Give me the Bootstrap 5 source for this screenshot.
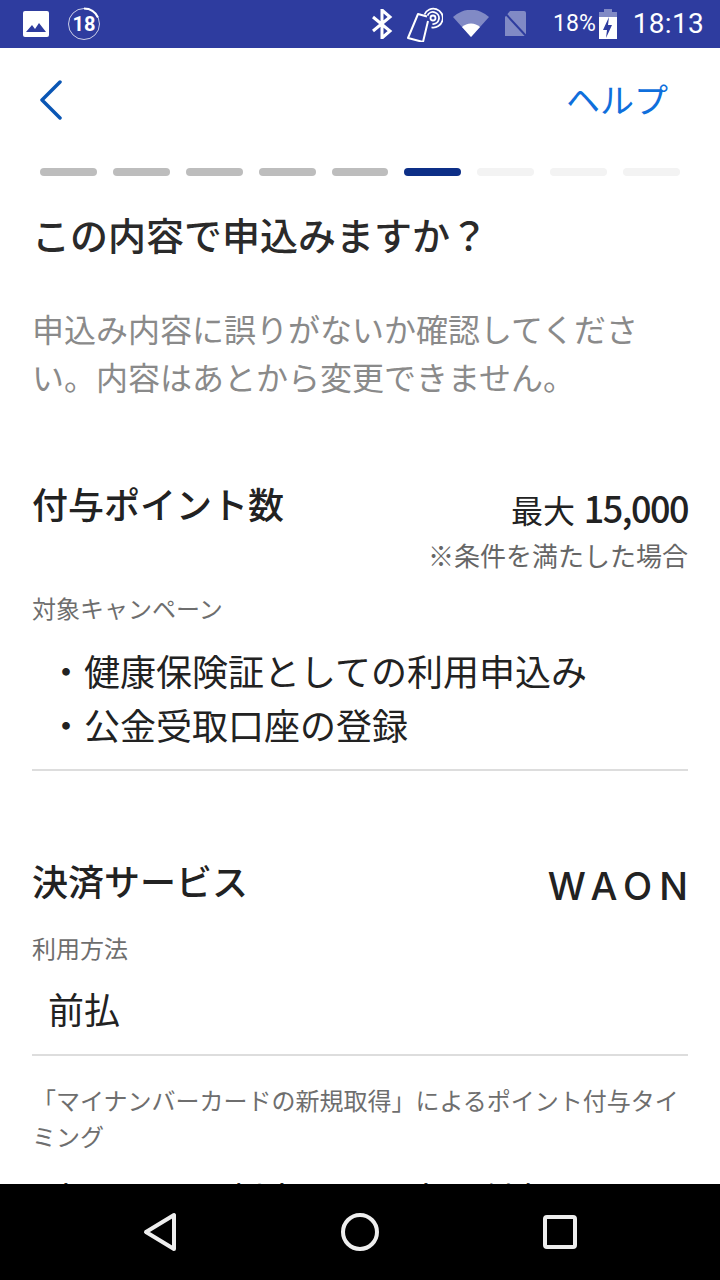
<!DOCTYPE html>
<html lang="ja">
<head>
    <meta charset="UTF-8">
    <title>申込み確認</title>
    <meta name="viewport" content="width=device-width, initial-scale=1">
    <link href="https://cdn.jsdelivr.net/npm/bootstrap@5.3.3/dist/css/bootstrap.min.css" rel="stylesheet">
    <style>
        body { font-family: "Noto Sans CJK JP", "Noto Sans", sans-serif; background: #fff; color: #222; }
        .phone { width: 720px; height: 1280px; overflow: hidden; }
        .status-bar { height: 48px; background: #2e3c9f; color: #fff; font-family: Roboto, sans-serif; padding: 0 16px 0 22px; }
        .status-clock { font-size: 28px; letter-spacing: .3px; margin-left: 15px; }
        .status-pct { font-size: 23px; margin-left: 25px; margin-right: 2px; }
        .gap-nfc { margin-left: 14px; }
        .gap-wifi { margin-left: 10px; }
        .gap-sim { margin-left: 13px; }
        .app-scroll { height: 1136px; overflow: hidden; padding: 0 32px; }
        .top-row { height: 104px; }
        .help-link { color: #0f6fdc; font-size: 34px; margin: 0 20px 3px 0; text-decoration: none; line-height: 1; }
        .step-row { gap: 16px; padding: 0 8px; margin-bottom: 32px; }
        .step { flex: 1; height: 8px; border-radius: 4px; background: #f3f3f3; }
        .step-done { background: #bdbdbd; }
        .step-now { background: #0d2f87; }
        .page-title { font-size: 38px; line-height: 52px; font-weight: 500; margin: 0 0 44px; color: #2a2a2a; }
        .page-lead { font-size: 32px; line-height: 48px; color: #8a8a8a; margin: 0 0 79px; }
        .item-head { font-size: 36px; line-height: 48px; font-weight: 500; }
        .item-value { font-size: 32px; line-height: 48px; margin-top: 4px; white-space: nowrap; }
        .item-value-low { margin-top: 6px; }
        .value-num { font-size: 36px; font-weight: 500; letter-spacing: -1.500px; margin-left: 2px; }
        .value-wide { font-family: Inter, sans-serif; font-size: 38px; font-weight: 500; letter-spacing: 7px; margin-right: -7px; }
        .item-note { font-size: 26px; line-height: 40px; color: #666; margin-top: 2px; }
        .item-label { font-size: 24px; line-height: 36px; color: #6e6e6e; }
        .item-body { font-size: 36px; line-height: 54px; margin-top: 17px; }
        .item-usage { margin-top: 15px; }
        .rule { border-bottom: 2px solid #ddd; padding-bottom: 18px; }
        .rule-short { padding-bottom: 19px; }
        .label-campaign { margin-top: 15px; }
        .section-second { margin-top: 85px; }
        .label-usage { margin-top: 20px; }
        .label-timing { margin-top: 26px; }
        .clipped-line { margin-top: 17px; }
        .nav-slot { width: 200px; }
    </style>
</head>
<body>
    <div class="phone d-flex flex-column">
        <div class="status-bar d-flex align-items-center flex-shrink-0">
            <svg width="28" height="28" viewBox="0 0 28 28"><rect x="1" y="1" width="26" height="26" rx="2" fill="#fff"/><path d="M4 22l6-7 3 4 4-6 7 9z" fill="#2e3c9f"/></svg>
            <svg class="ms-3" width="36" height="36" viewBox="0 0 36 36"><circle cx="18" cy="18" r="15.500" fill="none" stroke="#fff" stroke-opacity=".75" stroke-width="1"/><path d="M18 2.500a15.500 15.500 0 0 1 14 9" fill="none" stroke="#fff" stroke-width="2"/><text x="18" y="25" text-anchor="middle" font-family="Roboto" font-weight="700" font-size="20" fill="#fff">18</text></svg>
            <div class="ms-auto d-flex align-items-center">
                <svg width="22" height="30" viewBox="0 0 22 30"><path d="M2 8l17 14-8 7V1l8 7L2 22" fill="none" stroke="#fff" stroke-width="3"/></svg>
                <svg class="gap-nfc" width="36" height="36" viewBox="0 0 36 36"><path d="M20 10.500L11 8 1 32l15 4 5-21" fill="none" stroke="#fff" stroke-width="2" stroke-linejoin="round"/><circle cx="26" cy="12" r="2.500" fill="none" stroke="#fff" stroke-width="1.800"/><path d="M20.500 9.600A6 6 0 1 1 25.500 18M17.500 8.500A9.500 9.500 0 1 1 24.500 21.400" fill="none" stroke="#fff" stroke-width="1.800"/></svg>
                <svg class="gap-wifi" width="36" height="28" viewBox="0 0 36 28"><path d="M0 7a26 26 0 0 1 36 0L18 27z" fill="#fff" fill-opacity=".4"/><path d="M9 17a13 13 0 0 1 18 0l-9 10z" fill="#fff"/></svg>
                <svg class="gap-sim" width="26" height="28" viewBox="0 0 26 28"><path d="M8 1h14a2 2 0 0 1 2 2v23H3V7z" fill="#fff" fill-opacity=".4"/><path d="M1 1l24 26" stroke="#2e3c9f" stroke-width="2"/></svg>
                <span class="status-pct">18%</span>
                <svg width="20" height="30" viewBox="0 0 20 30"><path d="M6 0h8v3h5v27H1V3h5z" fill="#fff" fill-opacity=".4"/><path d="M1 8h18v22H1z" fill="#fff"/><path d="M11 8l-6 13h4l-1 8 6-13h-4z" fill="#2e3c9f"/></svg>
                <span class="status-clock">18:13</span>
            </div>
        </div>
        <div class="app-scroll flex-shrink-0">
            <div class="top-row d-flex align-items-center justify-content-between">
                <svg class="ms-2" width="22" height="40" viewBox="0 0 22 40"><path d="M20 2L2 20l18 18" fill="none" stroke="#0a56b4" stroke-width="3.500" stroke-linecap="round" stroke-linejoin="round"/></svg>
                <a class="help-link" href="#">ヘルプ</a>
            </div>
            <div class="step-row d-flex mt-3">
                <div class="step step-done"></div><div class="step step-done"></div><div class="step step-done"></div>
                <div class="step step-done"></div><div class="step step-done"></div><div class="step step-now"></div>
                <div class="step"></div><div class="step"></div><div class="step"></div>
            </div>
            <h1 class="page-title">この内容で申込みますか？</h1>
            <p class="page-lead">申込み内容に誤りがないか確認してください。内容はあとから変更できません。</p>
            <div class="d-flex justify-content-between">
                <div class="item-head">付与ポイント数</div>
                <div class="item-value">最大<span class="value-num"> 15,000</span></div>
            </div>
            <div class="item-note text-end">※条件を満たした場合</div>
            <div class="item-label label-campaign">対象キャンペーン</div>
            <div class="item-body rule ps-3">
                <div>・健康保険証としての利用申込み</div>
                <div>・公金受取口座の登録</div>
            </div>
            <div class="d-flex justify-content-between section-second">
                <div class="item-head">決済サービス</div>
                <div class="item-value item-value-low"><span class="value-wide">WAON</span></div>
            </div>
            <div class="item-label label-usage">利用方法</div>
            <div class="item-body item-usage rule rule-short ps-3">前払</div>
            <div class="item-label label-timing">「マイナンバーカードの新規取得」によるポイント付与タイミング</div>
            <div class="item-body clipped-line ps-3">申込みから判定、翌月末に付与</div>
        </div>
        <div class="flex-grow-1 bg-black d-flex align-items-center justify-content-center">
            <div class="nav-slot text-center"><svg width="36" height="40" viewBox="0 0 36 40"><path d="M32 3v34L4 20z" fill="none" stroke="#eee" stroke-width="4" stroke-linejoin="round"/></svg></div>
            <div class="nav-slot text-center"><svg width="40" height="40" viewBox="0 0 40 40"><circle cx="20" cy="20" r="17" fill="none" stroke="#eee" stroke-width="4"/></svg></div>
            <div class="nav-slot text-center"><svg width="36" height="36" viewBox="0 0 36 36"><rect x="3" y="3" width="30" height="30" rx="2" fill="none" stroke="#eee" stroke-width="4"/></svg></div>
        </div>
    </div>
    <script src="https://cdn.jsdelivr.net/npm/bootstrap@5.3.3/dist/js/bootstrap.bundle.min.js"></script>
</body>
</html>
